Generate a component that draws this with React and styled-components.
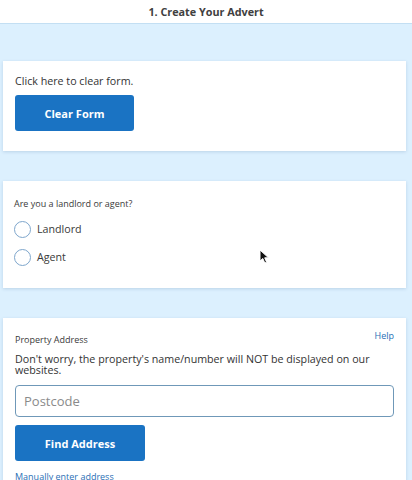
import React from "react";
import styled, { createGlobalStyle } from "styled-components";

const Global = createGlobalStyle`
  html, body { margin: 0; padding: 0; }
  body {
    background: #dcf0fe;
    font-family: "Open Sans", "Noto Sans", sans-serif;
    color: #333;
    overflow: hidden;
  }
`;

const Page = styled.div`
  position: relative;
  width: 412px;
  min-height: 480px;
  background: #dcf0fe;
`;

const Header = styled.header`
  height: 23px;
  background: #fff;
  border-bottom: 1px solid #c3dff3;
  display: flex;
  align-items: center;
  justify-content: center;
  font-size: 10.8px;
  font-weight: 700;
  color: #404040;
`;

const Content = styled.main`
  display: flex;
  flex-direction: column;
  gap: 30px;
  padding: 37px 6px 0 3px;
`;

const Card = styled.section`
  background: #fff;
  box-shadow: 0 1px 3px rgba(90, 130, 170, 0.25);
  padding: ${(p) => p.$pad || "13px 12px 20px"};
  display: flex;
  flex-direction: column;
  position: relative;
`;

const Text = styled.p`
  margin: ${(p) => p.$m || "0"};
  font-size: 10.7px;
  line-height: ${(p) => p.$lh || "17px"};
  color: #333;
`;

const Label = styled.div`
  font-size: 9px;
  line-height: 14px;
  color: #3a3a3a;
  margin-top: ${(p) => p.$mt || "0"};
`;

const Button = styled.button`
  margin-top: ${(p) => p.$mt || "5px"};
  width: ${(p) => p.$w};
  height: 36px;
  border: none;
  border-radius: 3px;
  background: #1a73c3;
  color: #fff;
  font-family: "Open Sans", "Noto Sans", sans-serif;
  font-weight: 700;
  font-size: 11px;
  cursor: pointer;
  padding: 0;
`;

const RadioList = styled.div`
  display: flex;
  flex-direction: column;
  gap: 6px;
  margin-top: 7px;
`;

const RadioRow = styled.label`
  display: flex;
  align-items: center;
  height: 22px;
  gap: 6px;
  font-size: 10.7px;
  color: #3a3a3a;
`;

const Circle = styled.span`
  width: 17px;
  height: 17px;
  border-radius: 50%;
  border: 1.5px solid #7ea6cc;
  box-sizing: border-box;
  flex: none;
`;

const TopRow = styled.div`
  display: flex;
  justify-content: space-between;
  align-items: flex-start;
`;

const LinkText = styled.a`
  font-size: 9px;
  color: #2a6fb5;
  text-decoration: none;
  line-height: 14px;
  margin-top: ${(p) => p.$mt || "0"};
`;

const Input = styled.input`
  margin-top: 8px;
  height: 32px;
  box-sizing: border-box;
  border: 1px solid #6f98b8;
  border-radius: 4px;
  padding: 0 8px;
  font-family: "Open Sans", "Noto Sans", sans-serif;
  font-size: 13px;
  color: #333;
  outline: none;
  &::placeholder { color: #8a8a8a; }
`;

const Cursor = styled.svg`
  position: absolute;
  left: 259px;
  top: 249px;
`;

export default function App() {
  return (
    <Page>
      <Global />
      <Header>1. Create Your Advert</Header>
      <Content>
        <Card $pad="12px 12px 20px">
          <Text>Click here to clear form.</Text>
          <Button $w="119px" $mt="5px">Clear Form</Button>
        </Card>
        <Card $pad="16px 11px 20px">
          <Label>Are you a landlord or agent?</Label>
          <RadioList>
            <RadioRow><Circle />Landlord</RadioRow>
            <RadioRow><Circle />Agent</RadioRow>
          </RadioList>
        </Card>
        <Card $pad="11px 12px 20px">
          <TopRow>
            <Label $mt="4px">Property Address</Label>
            <LinkText href="#">Help</LinkText>
          </TopRow>
          <Text $lh="11px" $m="7px 0 0">
            Don't worry, the property's name/number will NOT be displayed on our websites.
          </Text>
          <Input placeholder="Postcode" style={{ marginTop: "9px" }} />
          <Button $w="130px" $mt="8px">Find Address</Button>
          <LinkText href="#" $mt="9px">Manually enter address</LinkText>
        </Card>
      </Content>
      <Cursor width="11" height="15" viewBox="0 0 11 15">
        <path d="M1 1 L1 12 L3.8 9.5 L5.8 14 L7.6 13.2 L5.7 8.8 L9.5 8.8 Z" fill="#111" stroke="#fff" strokeWidth="1" />
      </Cursor>
    </Page>
  );
}
